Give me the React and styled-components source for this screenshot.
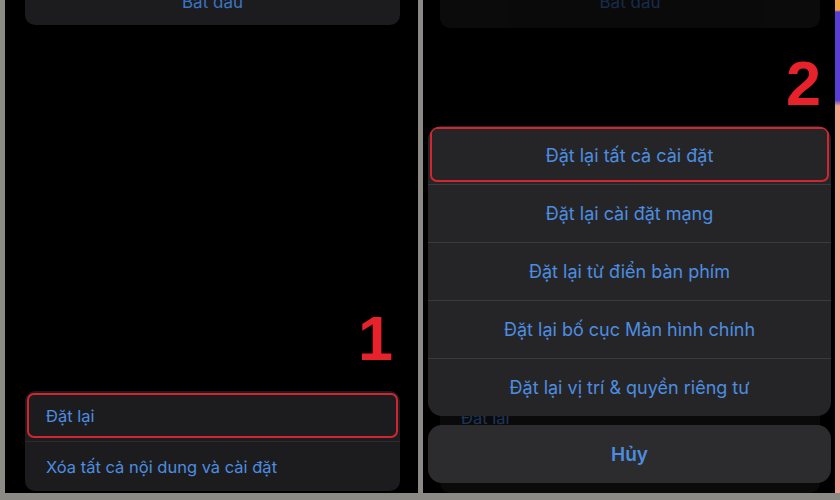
import styled, { createGlobalStyle } from "styled-components";

const BLUE = "#4d8de0";
const RED = "#e8222b";

const GlobalStyle = createGlobalStyle`
  html, body {
    margin: 0;
    padding: 0;
    background: #8b8a85;
  }
  body {
    font-family: Inter, "Noto Sans", sans-serif;
    -webkit-font-smoothing: antialiased;
  }
`;

const Page = styled.div`
  width: 840px;
  height: 500px;
  box-sizing: border-box;
  padding: 0 0 7px 5px;
  display: flex;
  overflow: hidden;
`;

const Screen = styled.div`
  position: relative;
  flex: none;
  width: ${(p) => p.width}px;
  margin-right: ${(p) => p.gap || 0}px;
  height: 493px;
  background: #000;
  display: flex;
  flex-direction: column;
  overflow: hidden;
`;

const Dim = styled.div`
  display: flex;
  flex-direction: column;
  height: 100%;
  opacity: ${(p) => (p.dimmed ? 0.45 : 1)};
`;

const TopCard = styled.div`
  margin: -20px ${(p) => p.right}px 0 ${(p) => p.left}px;
  height: ${(p) => p.height}px;
  background: #1c1c1e;
  border-radius: 10px;
  color: #3b74c2;
  font-size: 17px;
  text-align: center;
  line-height: 44px;
`;

const Spacer = styled.div`
  flex: 1;
`;

const Step = styled.div`
  align-self: flex-end;
  font-family: "Liberation Sans", Arial, sans-serif;
  font-weight: 700;
  font-size: 63px;
  line-height: 63px;
  color: ${RED};
  margin: ${(p) => p.margin};
`;

const ListCard = styled.div`
  margin: 0 ${(p) => p.right}px ${(p) => p.bottom}px ${(p) => p.left}px;
  background: #1c1c1e;
  border-radius: 10px;
  display: flex;
  flex-direction: column;
`;

const ListRow = styled.div`
  height: 50px;
  box-sizing: border-box;
  display: flex;
  align-items: center;
  padding-left: 21px;
  color: ${BLUE};
  font-size: 16.5px;
  border-top: ${(p) => (p.first ? "none" : "1px solid #2c2c2e")};
  position: relative;
`;

const Highlight = styled.div`
  position: absolute;
  left: 2px;
  right: 2px;
  top: ${(p) => p.top}px;
  bottom: ${(p) => p.bottom}px;
  border: 2px solid #d1262f;
  border-radius: 7px;
`;

const Overlay = styled.div`
  position: absolute;
  inset: 0;
  background: rgba(0, 0, 0, 0.15);
  display: flex;
  flex-direction: column;
  justify-content: flex-end;
  padding: 0 4px 10px 5px;
`;

const Sheet = styled.div`
  background: #252527;
  border-radius: 14px;
  display: flex;
  flex-direction: column;
  overflow: hidden;
`;

const SheetRow = styled.div`
  position: relative;
  height: 58px;
  box-sizing: border-box;
  display: flex;
  align-items: center;
  justify-content: center;
  color: ${BLUE};
  font-size: 18px;
  border-top: ${(p) => (p.first ? "none" : "1px solid #3a3a3d")};
`;

const Cancel = styled.div`
  margin-top: 9px;
  height: 58px;
  background: #2c2c2e;
  border-radius: 14px;
  display: flex;
  align-items: center;
  justify-content: center;
  color: ${BLUE};
  font-size: 19px;
  font-weight: 600;
`;

const Strip = styled.div`
  flex: none;
  width: 5px;
  height: 493px;
  background: linear-gradient(
    to bottom,
    #f2a443 0px,
    #f2a443 10px,
    #5b3fd2 12px,
    #5b3fd2 100px,
    #f0a48c 106px,
    #ee9c98 493px
  );
`;

const sheetItems = [
  "Đặt lại tất cả cài đặt",
  "Đặt lại cài đặt mạng",
  "Đặt lại từ điển bàn phím",
  "Đặt lại bố cục Màn hình chính",
  "Đặt lại vị trí & quyền riêng tư",
];

export default function App() {
  return (
    <>
      <GlobalStyle />
      <Page>
        <Screen width={413} gap={5}>
          <TopCard left={20} right={18} height={45}>
            Bắt đầu
          </TopCard>
          <Spacer />
          <Step margin="0 25px 21px 0">1</Step>
          <ListCard left={20} right={18} bottom={2}>
            <ListRow first>
              <Highlight top={2} bottom={3} />
              Đặt lại
            </ListRow>
            <ListRow>Xóa tất cả nội dung và cài đặt</ListRow>
          </ListCard>
        </Screen>

        <Screen width={412}>
          <Dim dimmed>
            <TopCard left={17} right={15} height={48}>
              Bắt đầu
            </TopCard>
            <Spacer />
            <ListCard left={17} right={15} bottom={0}>
              <ListRow first>Đặt lại</ListRow>
              <ListRow>Xóa tất cả nội dung và cài đặt</ListRow>
            </ListCard>
          </Dim>
          <Overlay>
            <Step margin="0 10px 11px 0">2</Step>
            <Sheet>
              {sheetItems.map((item, i) => (
                <SheetRow key={item} first={i === 0}>
                  {i === 0 && <Highlight top={1} bottom={2} />}
                  {item}
                </SheetRow>
              ))}
            </Sheet>
            <Cancel>Hủy</Cancel>
          </Overlay>
        </Screen>
        <Strip />
      </Page>
    </>
  );
}
